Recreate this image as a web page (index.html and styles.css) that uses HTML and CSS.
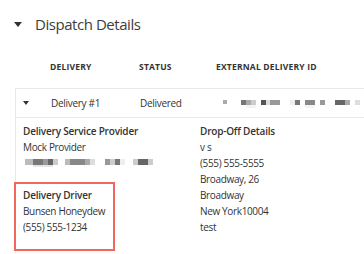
FILE: index.html
```html
<!DOCTYPE html>
<html lang="en">
  <head>
    <meta charset="utf-8" />
    <link rel="stylesheet" href="styles.css">
  </head>
  <body>
    <div id="dispatch">
      <div class="section-title">
        <svg class="caret" width="8" height="5" viewBox="0 0 8 5"><path d="M0 0h8L4 5z" fill="#333"/></svg>
        <span>Dispatch Details</span>
      </div>

      <div class="cols head">
        <span></span>
        <span>Delivery</span>
        <span>Status</span>
        <span>External Delivery ID</span>
      </div>

      <div class="card">
        <div class="cols row">
          <svg class="caret small" width="6" height="4" viewBox="0 0 6 4"><path d="M0 0h6L3 4z" fill="#333"/></svg>
          <span>Delivery #1</span>
          <span>Delivered</span>
          <svg class="blur" width="148" height="10" viewBox="0 0 148 10">
            <rect x="0" y="2" width="4" height="4" fill="#aaa"/>
            <rect x="18" y="2" width="5" height="5" fill="#777"/>
            <rect x="23" y="2" width="5" height="5" fill="#aaa"/>
            <rect x="28" y="2" width="5" height="5" fill="#ccc"/>
            <rect x="23" y="7" width="10" height="3" fill="#f4f4f4"/>
            <rect x="38" y="2" width="5" height="5" fill="#555"/>
            <rect x="43" y="2" width="4" height="5" fill="#ddd"/>
            <rect x="47" y="2" width="10" height="5" fill="#999"/>
            <rect x="67" y="2" width="5" height="5" fill="#eee"/>
            <rect x="72" y="2" width="5" height="5" fill="#777"/>
            <rect x="82" y="2" width="10" height="5" fill="#888"/>
            <rect x="82" y="7" width="10" height="3" fill="#f4f4f4"/>
            <rect x="97" y="2" width="5" height="5" fill="#999"/>
            <rect x="112" y="2" width="10" height="5" fill="#666"/>
            <rect x="122" y="2" width="5" height="5" fill="#aaa"/>
            <rect x="132" y="2" width="5" height="5" fill="#ddd"/>
          </svg>
        </div>

        <div class="details">
          <div class="col">
            <div class="label">Delivery Service Provider</div>
            <div>Mock Provider</div>
            <svg class="blur" width="132" height="16" viewBox="0 0 132 16">
              <rect x="2" y="4" width="8" height="6" fill="#bbb"/>
              <rect x="10" y="4" width="10" height="6" fill="#777"/>
              <rect x="20" y="4" width="5" height="6" fill="#999"/>
              <rect x="25" y="4" width="5" height="6" fill="#666"/>
              <rect x="30" y="4" width="5" height="6" fill="#ccc"/>
              <rect x="10" y="10" width="20" height="2" fill="#e6e6e6"/>
              <rect x="42" y="4" width="5" height="6" fill="#bbb"/>
              <rect x="47" y="4" width="15" height="6" fill="#888"/>
              <rect x="62" y="4" width="5" height="6" fill="#aaa"/>
              <rect x="67" y="4" width="5" height="6" fill="#ddd"/>
              <rect x="82" y="4" width="5" height="6" fill="#999"/>
              <rect x="87" y="4" width="5" height="6" fill="#ccc"/>
              <rect x="92" y="4" width="5" height="6" fill="#777"/>
              <rect x="97" y="4" width="5" height="6" fill="#eee"/>
              <rect x="110" y="4" width="5" height="6" fill="#ccc"/>
              <rect x="115" y="4" width="10" height="6" fill="#666"/>
              <rect x="125" y="4" width="5" height="6" fill="#ccc"/>
            </svg>
            <div class="driver">
              <div class="label">Delivery Driver</div>
              <div>Bunsen Honeydew</div>
              <div>(555) 555-1234</div>
            </div>
          </div>
          <div class="col">
            <div class="label">Drop-Off Details</div>
            <div>v s</div>
            <div>(555) 555-5555</div>
            <div>Broadway, 26</div>
            <div>Broadway</div>
            <div>New York10004</div>
            <div>test</div>
          </div>
        </div>
      </div>
    </div>
  </body>
</html>
```

FILE: styles.css
```css
body {
    margin: 0;
    font-family: "Open Sans", "Noto Sans", sans-serif;
    color: #333;
    background: #fff;
}

#dispatch {
    padding-left: 15px;
}

.section-title {
    display: flex;
    align-items: center;
    height: 24px;
    margin-top: 12px;
    font-size: 15px;
    letter-spacing: -0.45px;
    color: #3d3d3d;
}

  .section-title .caret { margin-left: -1px; margin-right: 13px; }

.cols {
    display: grid;
    grid-template-columns: 35px 89px 77px 1fr;
    align-items: center;
}

.head {
    height: 20px;
    margin-top: 20px;
    font-size: 8.5px;
    font-weight: bold;
    text-transform: uppercase;
    letter-spacing: 0.2px;
}

.card {
    margin-top: 12px;
    border-top: 1px solid #e6e9ed;
    border-left: 1px solid #e6e9ed;
    padding-bottom: 18px;
}

.row {
    height: 28px;
    border-bottom: 1px solid #e6e9ed;
    font-size: 10px;
    letter-spacing: -0.3px;
}

  .row .caret { margin-left: 7px; }
  .row .blur { margin-left: 6px; }

.details {
    display: grid;
    grid-template-columns: 177px 1fr;
    padding: 5px 0 0 7px;
    font-size: 10px;
    letter-spacing: -0.35px;
    line-height: 16px;
}

.blur { display: block; }

.label { font-weight: 600; letter-spacing: -0.2px; }

.driver {
    position: relative;
    margin-top: 16px;
}

  .driver::after {
      content: "";
      position: absolute;
      top: -5px; left: -9px;
      width: 97px; height: 65px;
      border: 2px solid #f2665e;
  }
```
